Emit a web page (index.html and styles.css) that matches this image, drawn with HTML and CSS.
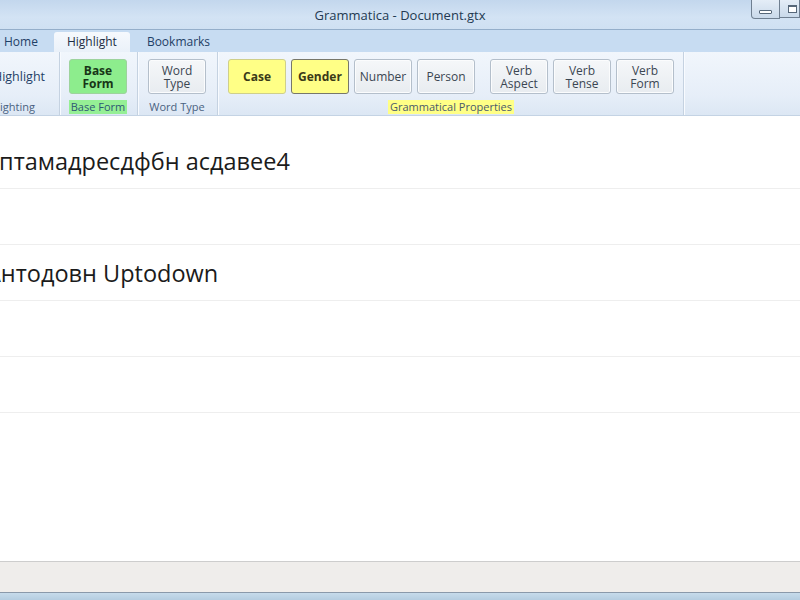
FILE: index.html
```html
<!DOCTYPE html>
<html lang="en">
<head>
	<meta charset="UTF-8">
	<title>Grammatica - Document.gtx</title>
	<link rel="stylesheet" href="styles.css">
</head>
<body>
	<div class="window">
		<div class="titlebar">
			<span></span>
			<span class="title">Grammatica - Document.gtx</span>
			<div class="win-buttons">
				<span class="win-btn min"><i></i></span>
				<span class="win-btn max"><i></i></span>
			</div>
		</div>
		<div class="tabs">
			<span class="tab">Home</span>
			<span class="tab active">Highlight</span>
			<span class="tab">Bookmarks</span>
		</div>
		<div class="ribbon">
			<div class="group first">
				<div class="buttons">
					<span class="big-text">Highlight</span>
				</div>
				<span class="group-label">Highlighting</span>
			</div>
			<div class="group base">
				<div class="buttons">
					<span class="btn green">Base<br>Form</span>
				</div>
				<span class="group-label green">Base Form</span>
			</div>
			<div class="group word">
				<div class="buttons">
					<span class="btn">Word<br>Type</span>
				</div>
				<span class="group-label">Word Type</span>
			</div>
			<div class="group wide">
				<div class="buttons">
					<span class="btn yellow">Case</span>
					<span class="btn yellow focused">Gender</span>
					<span class="btn">Number</span>
					<span class="btn">Person</span>
					<span class="spacer"></span>
					<span class="btn">Verb<br>Aspect</span>
					<span class="btn">Verb<br>Tense</span>
					<span class="btn">Verb<br>Form</span>
				</div>
				<span class="group-label yellow">Grammatical Properties</span>
			</div>
		</div>
		<div class="document">
			<div class="row"><span class="line-text">аптамадресдфбн асдавее4</span></div>
			<div class="row"></div>
			<div class="row"><span class="line-text">Антодовн Uptodown</span></div>
			<div class="row"></div>
			<div class="row"></div>
		</div>
		<div class="statusbar"></div>
		<div class="frame-bottom"></div>
	</div>
</body>
</html>
```
FILE: styles.css
```css
html, body {
	margin: 0;
	padding: 0;
	overflow: hidden;
}
body {
	font-family: "Open Sans", "Noto Sans", sans-serif;
	background: #ffffff;
}
.window {
	width: 800px;
	height: 600px;
	display: flex;
	flex-direction: column;
}
.titlebar {
	height: 29px;
	display: grid;
	grid-template-columns: 1fr auto 1fr;
	background: linear-gradient(to bottom, #c3d7ed, #d3e3f4 60%, #cfe0f2);
	border-bottom: 1px solid #94aeca;
}
.titlebar .title {
	font-size: 13px;
	color: #233a52;
	line-height: 30px;
}
.win-buttons {
	justify-self: end;
	display: flex;
	height: 19px;
}
.win-btn {
	display: flex;
	align-items: center;
	justify-content: center;
	height: 18px;
	border: 1px solid #6f7f91;
	border-top: none;
	background: linear-gradient(to bottom, #e4edf7, #c9d9ea);
}
.win-btn.min {
	width: 27px;
	border-bottom-left-radius: 4px;
}
.win-btn.max {
	width: 20px;
	border-left: none;
	justify-content: flex-start;
	padding-left: 8px;
	box-sizing: border-box;
}
.win-btn.min i {
	width: 11px;
	height: 2px;
	margin-top: 6px;
	border: 1px solid #566779;
	background: #ffffff;
	border-radius: 1px;
}
.win-btn.max i {
	width: 7px;
	height: 5px;
	border: 1px solid #566779;
	border-top-width: 2px;
	background: #ffffff;
}
.tabs {
	height: 22px;
	display: flex;
	align-items: flex-end;
	background: #c7dcf2;
	font-size: 12px;
	color: #1f3f66;
}
.tab {
	height: 20px;
	line-height: 20px;
	padding: 0 12px;
}
.tab:first-child {
	padding-left: 4px;
	padding-right: 16px;
}
.tab.active {
	background: linear-gradient(to bottom, #f6f9fd, #eaf1f9);
	border-radius: 3px 3px 0 0;
	color: #1e2e44;
	padding: 0 13px;
}
.tab:last-child {
	padding-left: 17px;
}
.ribbon {
	height: 63px;
	display: flex;
	background: linear-gradient(to bottom, #f1f6fc, #e6eef8 70%, #dce7f4);
	border-bottom: 1px solid #c4d3e4;
	overflow: hidden;
}
.group {
	display: flex;
	flex-direction: column;
	align-items: center;
	padding: 7px 10px 0 10px;
	border-right: 1px solid #c5d2e1;
	box-shadow: 1px 0 0 #f8fbff;
}
.group.first {
	margin-left: -30px;
	width: 75px;
	padding: 7px 14px 0 0;
	align-items: flex-end;
}
.group.first .big-text {
	font-size: 12.5px;
}
.group.first .group-label {
	margin-right: 8px;
}
.group.base {
	padding-left: 9px;
}
.group.word {
	padding-right: 11px;
}
.group.wide {
	padding-left: 10px;
	padding-right: 9px;
}
.buttons {
	display: flex;
	gap: 5px;
	height: 36px;
}
.spacer {
	width: 5px;
}
.big-text {
	font-size: 12px;
	color: #1f3f66;
	line-height: 36px;
}
.btn {
	width: 56px;
	height: 33px;
	display: flex;
	align-items: center;
	justify-content: center;
	text-align: center;
	font-size: 12px;
	line-height: 13px;
	color: #3b4652;
	border: 1px solid #b4bfcb;
	border-radius: 3px;
	background: linear-gradient(to bottom, #f5f7f9, #e8ecf0);
	box-shadow: inset 0 0 0 1px #fbfcfd;
}
.btn.green {
	background: #8ded8d;
	border-color: #9dd39d;
	box-shadow: none;
	color: #173517;
	font-weight: bold;
}
.btn.yellow {
	background: #ffff86;
	border-color: #cfcf8a;
	box-shadow: none;
	color: #3a3a18;
	font-weight: bold;
}
.btn.yellow.focused {
	border-color: #77776a;
}
.group-label {
	margin: 5px -10px 0;
	font-size: 11px;
	line-height: 14px;
	color: #4a6281;
	padding: 0 2px;
	white-space: nowrap;
}
.group-label.green {
	background: #95ef95;
	color: #2d5774;
	margin: 5px 0 0;
	padding: 0;
	width: 58px;
	text-align: center;
}
.group-label.yellow {
	background: #ffff86;
	color: #4a5a6a;
}
.document {
	flex: 1;
	padding-top: 17px;
	overflow: hidden;
}
.row {
	height: 55px;
	border-bottom: 1px solid #eeeeee;
	display: flex;
	align-items: center;
}
.line-text {
	font-size: 23.5px;
	color: #1b1b1b;
	margin-left: -14px;
	white-space: nowrap;
}
.statusbar {
	height: 30px;
	border-top: 1px solid #cdcdcd;
	background: #efedeb;
}
.frame-bottom {
	height: 7px;
	border-top: 1px solid #8a99aa;
	background: linear-gradient(to bottom, #c6dbeb, #b5cde0);
}
```
